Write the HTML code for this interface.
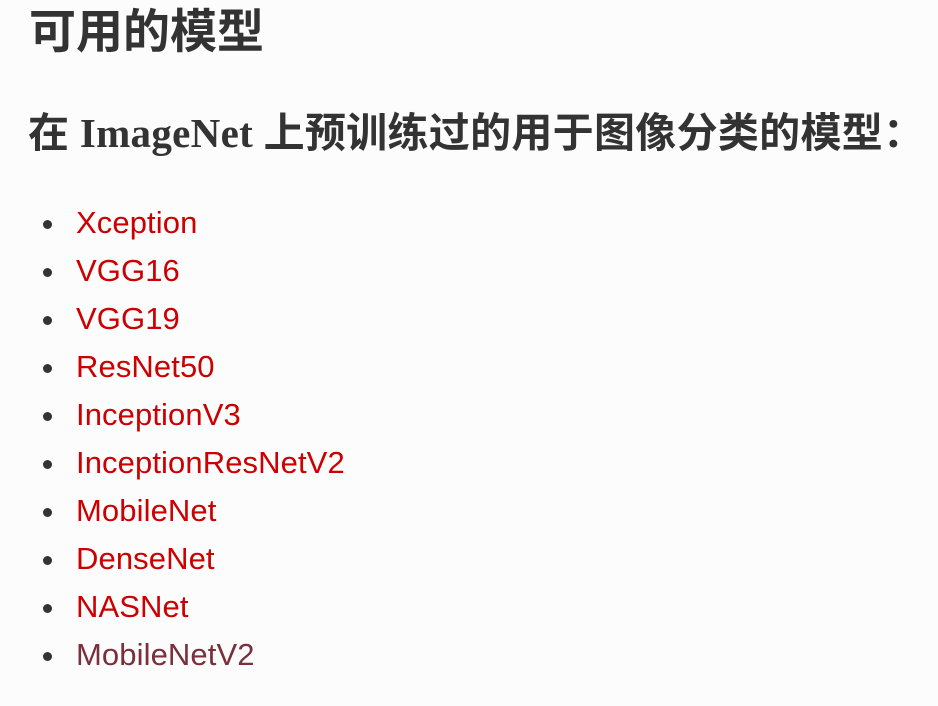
<!DOCTYPE html>
<html><head><meta charset="utf-8"><style>
body{margin:0;background:#fcfcfc;width:938px;height:706px;overflow:hidden;color:#333;font-family:"Liberation Sans","Noto Sans CJK SC",sans-serif}
h1{position:absolute;left:29px;top:4px;margin:0;font-size:47px;line-height:56px;font-weight:bold}
h2{position:absolute;left:28px;top:108px;margin:0;font-size:41px;line-height:50px;font-weight:bold;white-space:nowrap;font-family:"Liberation Serif","Noto Sans CJK SC",serif;letter-spacing:0.3px}
ul{position:absolute;left:0;top:199px;margin:0;padding:0 0 0 76px;list-style:none;font-size:31px;line-height:48px;letter-spacing:0.1px}
li{color:#c00;position:relative}
li::before{content:"";position:absolute;left:-33px;top:21px;width:9px;height:9px;border-radius:50%;background:#333}
li.v{color:#7b2f3b}
</style></head><body>
<h1>可用的模型</h1>
<h2>在 ImageNet 上预训练过的用于图像分类的模型：</h2>
<ul>
<li>Xception</li><li>VGG16</li><li>VGG19</li><li>ResNet50</li><li>InceptionV3</li><li>InceptionResNetV2</li><li>MobileNet</li><li>DenseNet</li><li>NASNet</li><li class="v">MobileNetV2</li>
</ul>
</body></html>
